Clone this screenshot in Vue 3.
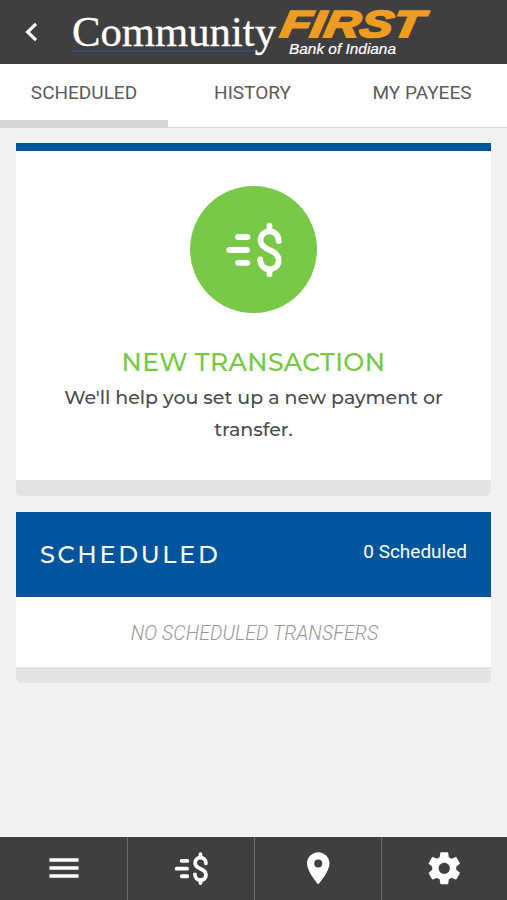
<script setup>
import { ref } from 'vue'

const tabs = ['SCHEDULED', 'HISTORY', 'MY PAYEES']
const active = ref(0)
const scheduledCount = ref(0)
</script>

<template>
  <div class="screen">
    <header class="header">
      <button class="back" aria-label="Back">
        <svg width="14" height="20" viewBox="0 0 14 20">
          <path d="M12 1.800 3.600 10l8.400 8.200" fill="none" stroke="#fff" stroke-width="3.200" />
        </svg>
      </button>
      <svg class="logo" width="370" height="64" viewBox="0 0 370 64">
        <path d="M-1 51H182" stroke="#344a78" stroke-width="2" />
        <text class="logo-name" x="-1" y="46" textLength="204" lengthAdjust="spacingAndGlyphs">Community</text>
        <g transform="translate(205 37) skewX(-10)">
          <text class="logo-first" x="1" y="0" textLength="142" lengthAdjust="spacingAndGlyphs">FIRST</text>
        </g>
        <text class="logo-sub" x="216" y="53.5" textLength="107" lengthAdjust="spacingAndGlyphs">Bank of Indiana</text>
      </svg>
    </header>

    <nav class="tabs">
      <button
        v-for="(tab, i) in tabs"
        :key="tab"
        class="tab"
        :class="{ active: active === i }"
        @click="active = i"
      >{{ tab }}</button>
    </nav>

    <main class="content">
      <section class="card new">
        <div class="circle">
          <svg width="58" height="56" viewBox="0 0 58 56">
            <g fill="none" stroke="#fff" stroke-width="5.8" stroke-linecap="round">
              <path d="M13 15H22.400M4.300 28H22M13 40.800H22.400" />
              <path d="M44.500 3.600V9M44.500 47.300V52.200" />
              <path d="M53.700 19C53.700 13 49.500 9.300 44.500 9.300S35.600 13 35.600 18.300C35.600 23.500 39.500 26 44.500 28S53.700 32.500 53.700 38.300S49.500 47.300 44.500 47.300S35.200 43.500 35.200 37.500" />
            </g>
          </svg>
        </div>
        <h2 class="new-title">NEW TRANSACTION</h2>
        <p class="new-text">We'll help you set up a new payment or<br />transfer.</p>
      </section>

      <section class="card list">
        <div class="list-head">
          <h2 class="list-title">SCHEDULED</h2>
          <span class="list-count">{{ scheduledCount }} Scheduled</span>
        </div>
        <p class="empty">NO SCHEDULED TRANSFERS</p>
      </section>
    </main>

    <footer class="footer">
      <button class="foot" aria-label="Menu">
        <svg class="menu-icon" width="30" height="22" viewBox="0 0 30 22">
          <path d="M.5 3H29.500M.5 11H29.500M.5 19H29.500" stroke="#fff" stroke-width="3.500" />
        </svg>
      </button>
      <button class="foot" aria-label="Transfer">
        <svg width="34.500" height="33.300" viewBox="0 0 58 56">
          <g fill="none" stroke="#fff" stroke-width="6.4" stroke-linecap="round">
            <path d="M13 15H22.400M4.300 28H22M13 40.800H22.400" />
            <path d="M44.500 3.600V9M44.500 47.300V52.200" />
            <path d="M53.700 19C53.700 13 49.500 9.300 44.500 9.300S35.600 13 35.600 18.300C35.600 23.500 39.500 26 44.500 28S53.700 32.500 53.700 38.300S49.500 47.300 44.500 47.300S35.200 43.500 35.200 37.500" />
          </g>
        </svg>
      </button>
      <button class="foot" aria-label="Locations">
        <svg class="pin-icon" width="38.500" height="38.500" viewBox="0 0 24 24">
          <path fill="#fff" d="M12 2C8.130 2 5 5.130 5 9c0 5.250 7 13 7 13s7-7.750 7-13c0-3.870-3.130-7-7-7zm0 9.500a2.500 2.500 0 0 1 0-5 2.500 2.500 0 0 1 0 5z" />
        </svg>
      </button>
      <button class="foot" aria-label="Settings">
        <svg class="gear-icon" width="38.500" height="38.500" viewBox="0 0 24 24">
          <path fill="#fff" d="M19.430 12.980c.04-.32.07-.64.07-.98s-.03-.66-.07-.98l2.110-1.650c.19-.15.24-.42.12-.64l-2-3.460c-.12-.22-.39-.3-.61-.22l-2.490 1c-.52-.4-1.080-.73-1.690-.98l-.38-2.650C14.460 2.180 14.250 2 14 2h-4c-.25 0-.46.18-.49.42l-.38 2.650c-.61.25-1.170.59-1.690.98l-2.490-1c-.23-.09-.49 0-.61.22l-2 3.460c-.13.22-.07.49.12.64l2.110 1.650c-.04.32-.07.65-.07.98s.03.66.07.98l-2.110 1.650c-.19.15-.24.42-.12.64l2 3.460c.12.22.39.3.61.22l2.490-1c.52.4 1.080.73 1.690.98l.38 2.650c.03.24.24.42.49.42h4c.25 0 .46-.18.49-.42l.38-2.650c.61-.25 1.170-.59 1.690-.98l2.490 1c.23.09.49 0 .61-.22l2-3.460c.12-.22.07-.49-.12-.64l-2.110-1.650zM12 15.500c-1.930 0-3.500-1.570-3.500-3.500s1.570-3.500 3.500-3.500 3.500 1.570 3.500 3.500-1.570 3.500-3.500 3.500z" />
        </svg>
      </button>
    </footer>
  </div>
</template>

<style>
body {
  background: #f1f1f1;
}
</style>

<style scoped>
.screen {
  display: flex;
  flex-direction: column;
  height: 900px;
  background: #f1f1f1;
  font-family: Roboto, "Liberation Sans", sans-serif;
}
button {
  margin: 0;
  padding: 0;
  border: 0;
  background: none;
  font: inherit;
}
h2,
p {
  margin: 0;
}
svg {
  display: block;
}
.header {
  display: flex;
  align-items: center;
  height: 64px;
  background: #3f3f3f;
  flex: none;
}
.back {
  width: 73px;
  padding-left: 24px;
  box-sizing: border-box;
}
.logo {
  overflow: visible;
}
.logo-name {
  font-family: "Liberation Serif", serif;
  font-size: 43px;
  fill: #fff;
  stroke: #fff;
  stroke-width: 0.3px;
}
.logo-first {
  font-family: "Liberation Sans", sans-serif;
  font-size: 37.5px;
  font-weight: 700;
  font-style: italic;
  fill: #ee9d22;
  stroke: #ee9d22;
  stroke-width: 2px;
}
.logo-sub {
  font-family: "Liberation Sans", sans-serif;
  font-size: 15px;
  font-style: italic;
  fill: #fff;
  stroke: #fff;
  stroke-width: 0.2px;
}
.tabs {
  display: grid;
  grid-template-columns: 168px 169px 170px;
  height: 64px;
  box-sizing: border-box;
  border-bottom: 1px solid #d8d8d8;
  background: #fff;
  flex: none;
}
.tab {
  box-sizing: border-box;
  height: 64px;
  border-bottom: 8px solid transparent;
  font-size: 19px;
  color: #5b5b5b;
  white-space: nowrap;
}
.tab.active {
  border-bottom-color: #d6d6d6;
}
.content {
  display: flex;
  flex-direction: column;
  gap: 16px;
  flex: 1;
  padding: 15px 16px 0;
}
.card {
  box-sizing: border-box;
  background: #fff;
  border-bottom: 16px solid #e3e3e3;
  border-radius: 0 0 6px 6px;
}
.new {
  display: flex;
  flex-direction: column;
  align-items: center;
  height: 353px;
  border-top: 8px solid #00559d;
  padding-top: 35px;
}
.circle {
  display: flex;
  align-items: center;
  justify-content: center;
  width: 127px;
  height: 127px;
  border-radius: 50%;
  background: #78c947;
}
.new-title {
  margin-top: 33px;
  font: 550 25px/32px Montserrat, Inter, sans-serif;
  letter-spacing: 0.4px;
  color: #75c842;
}
.new-text {
  margin-top: 4px;
  font: 500 19px/32px Montserrat, Inter, sans-serif;
  letter-spacing: -0.03px;
  color: #4c4c4c;
  text-align: center;
  white-space: nowrap;
}
.list {
  height: 171px;
}
.list-head {
  display: flex;
  align-items: center;
  justify-content: space-between;
  height: 85px;
  padding: 0 24px;
  background: #00559d;
  color: #fff;
}
.list-title {
  font: 500 24px/32px Montserrat, Inter, sans-serif;
  letter-spacing: 2.65px;
}
.list-count {
  font-size: 19px;
  padding-bottom: 6px;
}
.empty {
  padding-left: 2px;
  font-size: 19.5px;
  font-style: italic;
  font-weight: 300;
  line-height: 74px;
  letter-spacing: 0.1px;
  text-align: center;
  color: #999;
}
.footer {
  display: grid;
  grid-template-columns: 128px 127px 127px 125px;
  height: 63px;
  background: #3f3f3f;
  flex: none;
}
.foot {
  display: flex;
  align-items: center;
  justify-content: center;
  box-sizing: border-box;
  border-right: 1px solid #6a6a6a;
}
.foot:last-child {
  border-right: 0;
}
.menu-icon {
  margin-bottom: 2px;
}
.pin-icon,
.gear-icon {
  margin-bottom: 1px;
}
</style>
